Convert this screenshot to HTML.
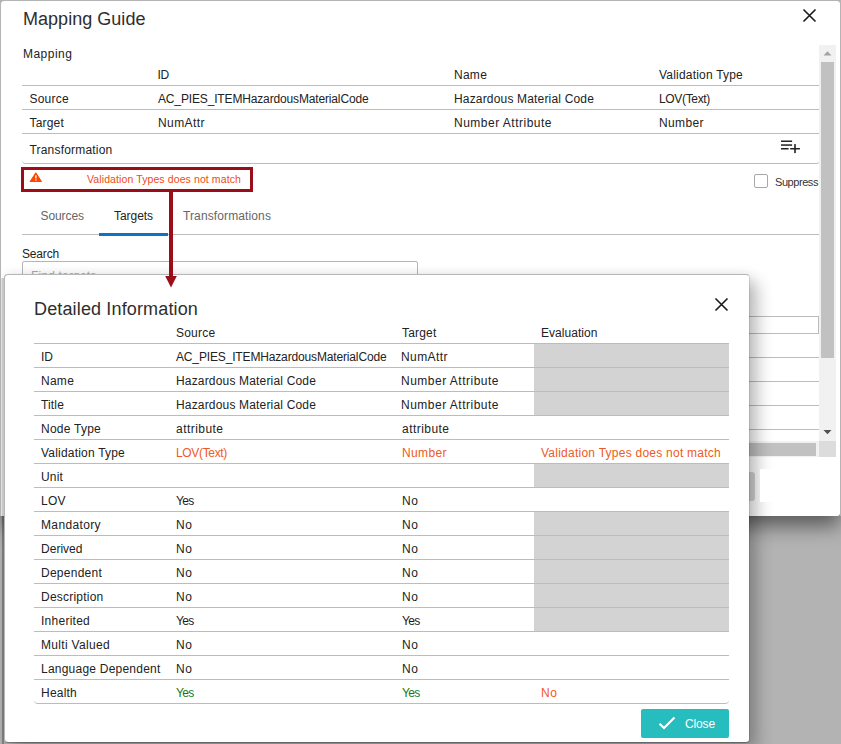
<!DOCTYPE html>
<html><head><meta charset="utf-8"><title>Mapping Guide</title>
<style>
html,body{margin:0;padding:0}
body{width:841px;height:744px;overflow:hidden;background:#b3b3b3;font-family:"Liberation Sans",sans-serif;font-size:12px;color:#222;position:relative}
.abs,.t,.ln,.g{position:absolute}
.t{white-space:nowrap;line-height:20px;display:block}
.ln{height:1px;background:#bcbcbc}
#outer{position:absolute;left:1px;top:1px;width:839px;height:515px;background:#fff;border-radius:3px;box-shadow:0 10px 20px rgba(0,0,0,.5)}
#oc{position:absolute;left:-1px;top:-1px;width:841px;height:517px;overflow:hidden}
#detail{position:absolute;left:4px;top:274px;width:744px;height:467px;background:#fff;background-clip:padding-box;border:1px solid;border-color:#b6b6b6 rgba(0,0,0,.1) rgba(0,0,0,.25) #b6b6b6;border-radius:4px;box-shadow:8px 8px 16px rgba(0,0,0,.24),0 0 12px rgba(0,0,0,.08)}
.g{background:#d3d3d3}
</style></head><body>
<div id="outer"><div id="oc">
<!-- table lines -->
<div class="ln" style="left:22px;top:85px;width:797px"></div>
<div class="ln" style="left:22px;top:109px;width:797px"></div>
<div class="ln" style="left:22px;top:133px;width:797px"></div>
<div class="abs" style="left:22px;top:150px;width:798px;height:13px;border-bottom:1px solid #bcbcbc;border-radius:0 0 4px 4px"></div>
<!-- playlist add icon -->
<svg class="abs" style="left:774px;top:134px" width="32" height="26" viewBox="0 0 32 26"><g fill="#222"><rect x="7" y="6.5" width="11.1" height="1.5"/><rect x="7" y="10.3" width="11.1" height="1.5"/><rect x="7" y="14" width="7.6" height="1.5"/><rect x="16.2" y="14" width="9.7" height="1.5"/><rect x="20.2" y="10.1" width="1.6" height="9"/></g></svg>
<!-- warning box -->
<div class="abs" style="left:21px;top:167px;width:226px;height:19px;border:3px solid #9c0d1a"></div>
<svg class="abs" style="left:29px;top:171px" width="14" height="12" viewBox="0 0 14 12"><path d="M6.8 1.8 L12.5 10.5 H1.1 Z" fill="#ff4500" stroke="#ff4500" stroke-width="1" stroke-linejoin="round"/><rect x="6.2" y="4.3" width="1.3" height="3.2" fill="#fff"/><rect x="6.2" y="8.4" width="1.3" height="1.3" fill="#fff"/></svg>
<!-- suppress checkbox -->
<div class="abs" style="left:754px;top:174px;width:12px;height:12px;border:1px solid #a8a8a8;border-radius:2px;background:#fff"></div>
<!-- tabs -->
<div class="ln" style="left:22px;top:234px;width:797px"></div>
<div class="abs" style="left:99px;top:233px;width:69px;height:3px;background:#1272c0"></div>
<!-- search input -->
<div class="abs" style="left:22px;top:261px;width:394px;height:28px;border:1px solid #b6b6b6;border-radius:2px"></div>
<!-- right side rows behind -->
<div class="abs" style="left:700px;top:316px;width:118px;height:16px;border:1px solid #bcbcbc;border-left:0"></div>
<div class="ln" style="left:700px;top:357px;width:119px"></div>
<div class="ln" style="left:700px;top:381px;width:119px"></div>
<div class="ln" style="left:700px;top:405px;width:119px"></div>
<div class="ln" style="left:700px;top:429px;width:119px"></div>
<!-- v scrollbar -->
<div class="abs" style="left:819px;top:45px;width:17px;height:396px;background:#f1f1f1"></div>
<div class="abs" style="left:821px;top:62px;width:13px;height:296px;background:#c1c1c1"></div>
<svg class="abs" style="left:819px;top:45px" width="17" height="17" viewBox="0 0 17 17"><path d="M4.5 10.5 L8.5 6.2 L12.5 10.5 Z" fill="#a3a3a3"/></svg>
<svg class="abs" style="left:819px;top:424px" width="17" height="17" viewBox="0 0 17 17"><path d="M4.5 6 L8.5 10.3 L12.5 6 Z" fill="#505050"/></svg>
<!-- h scrollbar -->
<div class="abs" style="left:22px;top:441px;width:797px;height:16px;background:#f1f1f1"></div>
<div class="abs" style="left:700px;top:443px;width:116px;height:13px;background:#c1c1c1"></div>
<div class="abs" style="left:819px;top:441px;width:17px;height:16px;background:#dcdcdc"></div>
<!-- footer -->
<div class="abs" style="left:660px;top:472px;width:95px;height:29px;background:#d6d6d6;border-radius:3px"></div>
<!-- close X -->
<svg class="abs" style="left:802px;top:8px" width="15" height="15" viewBox="0 0 15 15"><path d="M1.5 1.5 L13.5 13.5 M13.5 1.5 L1.5 13.5" stroke="#1a1a1a" stroke-width="1.6" fill="none"/></svg>
<!-- arrow -->
<div class="abs" style="left:169px;top:192px;width:4px;height:86px;background:#9c0d1a"></div>
<span class="t" style="left:23.0px;top:9.0px;font-size:18px;color:#2e2e2e;letter-spacing:0.031px;">Mapping Guide</span>
<span class="t" style="left:23.0px;top:44.0px;letter-spacing:0.467px;">Mapping</span>
<span class="t" style="left:157.5px;top:65.0px;letter-spacing:-0.250px;">ID</span>
<span class="t" style="left:454.0px;top:65.0px;letter-spacing:0.264px;">Name</span>
<span class="t" style="left:659.0px;top:65.0px;letter-spacing:0.203px;">Validation Type</span>
<span class="t" style="left:29.5px;top:89.0px;letter-spacing:0.209px;">Source</span>
<span class="t" style="left:158.0px;top:89.0px;letter-spacing:-0.150px;">AC_PIES_ITEMHazardousMaterialCode</span>
<span class="t" style="left:454.0px;top:89.0px;letter-spacing:0.171px;">Hazardous Material Code</span>
<span class="t" style="left:659.0px;top:89.0px;letter-spacing:-0.335px;">LOV(Text)</span>
<span class="t" style="left:29.5px;top:113.0px;letter-spacing:0.183px;">Target</span>
<span class="t" style="left:158.0px;top:113.0px;letter-spacing:0.426px;">NumAttr</span>
<span class="t" style="left:454.0px;top:113.0px;letter-spacing:0.497px;">Number Attribute</span>
<span class="t" style="left:659.0px;top:113.0px;letter-spacing:0.385px;">Number</span>
<span class="t" style="left:29.5px;top:140.0px;letter-spacing:0.189px;">Transformation</span>
<span class="t" style="left:87.0px;top:169.0px;font-size:10.5px;color:#f24a14;letter-spacing:0.103px;">Validation Types does not match</span>
<span class="t" style="left:775.0px;top:172.0px;font-size:11px;color:#333;letter-spacing:-0.436px;">Suppress</span>
<span class="t" style="left:40.5px;top:206.0px;color:#666;letter-spacing:-0.076px;">Sources</span>
<span class="t" style="left:114.0px;top:206.0px;letter-spacing:-0.051px;">Targets</span>
<span class="t" style="left:183.0px;top:206.0px;color:#666;letter-spacing:0.117px;">Transformations</span>
<span class="t" style="left:22.0px;top:244.0px;letter-spacing:-0.172px;">Search</span>
<span class="t" style="left:31.0px;top:266.0px;color:#aaa;letter-spacing:0.174px;">Find targets</span>
</div></div>

<div id="detail"><div class="abs" style="left:-5px;top:-275px;width:0;height:0">
<!-- grey cells -->
<div class="g" style="left:534px;top:344px;width:195px;height:72px"></div>
<div class="g" style="left:534px;top:464px;width:195px;height:24px"></div>
<div class="g" style="left:534px;top:512px;width:195px;height:120px"></div>
<div class="ln" style="left:34px;top:343px;width:695px"></div>
<div class="ln" style="left:34px;top:367px;width:695px"></div>
<div class="ln" style="left:34px;top:391px;width:695px"></div>
<div class="ln" style="left:34px;top:415px;width:695px"></div>
<div class="ln" style="left:34px;top:439px;width:695px"></div>
<div class="ln" style="left:34px;top:463px;width:695px"></div>
<div class="ln" style="left:34px;top:487px;width:695px"></div>
<div class="ln" style="left:34px;top:511px;width:695px"></div>
<div class="ln" style="left:34px;top:535px;width:695px"></div>
<div class="ln" style="left:34px;top:559px;width:695px"></div>
<div class="ln" style="left:34px;top:583px;width:695px"></div>
<div class="ln" style="left:34px;top:607px;width:695px"></div>
<div class="ln" style="left:34px;top:631px;width:695px"></div>
<div class="ln" style="left:34px;top:655px;width:695px"></div>
<div class="ln" style="left:34px;top:679px;width:695px"></div>
<div class="abs" style="left:34px;top:698px;width:695px;height:5px;border-bottom:1px solid #bcbcbc;border-radius:0 0 4px 4px"></div>
<!-- close X -->
<svg class="abs" style="left:714px;top:297px" width="15" height="15" viewBox="0 0 15 15"><path d="M1.5 1.5 L13.5 13.5 M13.5 1.5 L1.5 13.5" stroke="#1a1a1a" stroke-width="1.6" fill="none"/></svg>
<!-- close button -->
<div class="abs" style="left:641px;top:709px;width:88px;height:29px;background:#27bcbd;border-radius:2px"></div>
<svg class="abs" style="left:657px;top:715px" width="20" height="16" viewBox="0 0 20 16"><path d="M2.5 8.8 L7 13 L17.5 2.5" stroke="#fff" stroke-width="2.2" fill="none"/></svg>
<span class="t" style="left:34.0px;top:299.0px;font-size:18px;color:#2e2e2e;letter-spacing:0.145px;">Detailed Information</span>
<span class="t" style="left:176.0px;top:323.0px;letter-spacing:0.209px;">Source</span>
<span class="t" style="left:402.0px;top:323.0px;letter-spacing:0.183px;">Target</span>
<span class="t" style="left:541.0px;top:323.0px;letter-spacing:0.045px;">Evaluation</span>
<span class="t" style="left:41.0px;top:347.0px;">ID</span>
<span class="t" style="left:176.0px;top:347.0px;letter-spacing:-0.150px;">AC_PIES_ITEMHazardousMaterialCode</span>
<span class="t" style="left:401.0px;top:347.0px;letter-spacing:0.426px;">NumAttr</span>
<span class="t" style="left:41.0px;top:371.0px;letter-spacing:0.264px;">Name</span>
<span class="t" style="left:176.0px;top:371.0px;letter-spacing:0.171px;">Hazardous Material Code</span>
<span class="t" style="left:401.0px;top:371.0px;letter-spacing:0.497px;">Number Attribute</span>
<span class="t" style="left:41.0px;top:395.0px;letter-spacing:0.147px;">Title</span>
<span class="t" style="left:176.0px;top:395.0px;letter-spacing:0.171px;">Hazardous Material Code</span>
<span class="t" style="left:401.0px;top:395.0px;letter-spacing:0.497px;">Number Attribute</span>
<span class="t" style="left:41.0px;top:419.0px;letter-spacing:0.241px;">Node Type</span>
<span class="t" style="left:176.0px;top:419.0px;letter-spacing:0.460px;">attribute</span>
<span class="t" style="left:402.0px;top:419.0px;letter-spacing:0.460px;">attribute</span>
<span class="t" style="left:41.0px;top:443.0px;letter-spacing:0.203px;">Validation Type</span>
<span class="t" style="left:176.0px;top:443.0px;color:#ee5a24;letter-spacing:-0.335px;">LOV(Text)</span>
<span class="t" style="left:402.0px;top:443.0px;color:#ee5a24;letter-spacing:0.385px;">Number</span>
<span class="t" style="left:541.0px;top:443.0px;color:#ee5a24;letter-spacing:0.247px;">Validation Types does not match</span>
<span class="t" style="left:41.0px;top:467.0px;letter-spacing:0.176px;">Unit</span>
<span class="t" style="left:41.0px;top:491.0px;letter-spacing:0.264px;">LOV</span>
<span class="t" style="left:176.0px;top:491.0px;letter-spacing:-0.693px;">Yes</span>
<span class="t" style="left:402.0px;top:491.0px;letter-spacing:0.578px;">No</span>
<span class="t" style="left:41.0px;top:515.0px;letter-spacing:0.366px;">Mandatory</span>
<span class="t" style="left:176.0px;top:515.0px;letter-spacing:0.578px;">No</span>
<span class="t" style="left:402.0px;top:515.0px;letter-spacing:0.578px;">No</span>
<span class="t" style="left:41.0px;top:539.0px;letter-spacing:0.020px;">Derived</span>
<span class="t" style="left:176.0px;top:539.0px;letter-spacing:0.578px;">No</span>
<span class="t" style="left:402.0px;top:539.0px;letter-spacing:0.578px;">No</span>
<span class="t" style="left:41.0px;top:563.0px;letter-spacing:0.253px;">Dependent</span>
<span class="t" style="left:176.0px;top:563.0px;letter-spacing:0.578px;">No</span>
<span class="t" style="left:402.0px;top:563.0px;letter-spacing:0.578px;">No</span>
<span class="t" style="left:41.0px;top:587.0px;letter-spacing:0.224px;">Description</span>
<span class="t" style="left:176.0px;top:587.0px;letter-spacing:0.578px;">No</span>
<span class="t" style="left:402.0px;top:587.0px;letter-spacing:0.578px;">No</span>
<span class="t" style="left:41.0px;top:611.0px;letter-spacing:0.255px;">Inherited</span>
<span class="t" style="left:176.0px;top:611.0px;letter-spacing:-0.693px;">Yes</span>
<span class="t" style="left:402.0px;top:611.0px;letter-spacing:-0.693px;">Yes</span>
<span class="t" style="left:41.0px;top:635.0px;letter-spacing:0.320px;">Multi Valued</span>
<span class="t" style="left:176.0px;top:635.0px;letter-spacing:0.578px;">No</span>
<span class="t" style="left:402.0px;top:635.0px;letter-spacing:0.578px;">No</span>
<span class="t" style="left:41.0px;top:659.0px;letter-spacing:0.225px;">Language Dependent</span>
<span class="t" style="left:176.0px;top:659.0px;letter-spacing:0.578px;">No</span>
<span class="t" style="left:402.0px;top:659.0px;letter-spacing:0.578px;">No</span>
<span class="t" style="left:41.0px;top:683.0px;letter-spacing:0.219px;">Health</span>
<span class="t" style="left:176.0px;top:683.0px;color:#157a15;letter-spacing:-0.693px;">Yes</span>
<span class="t" style="left:402.0px;top:683.0px;color:#157a15;letter-spacing:-0.693px;">Yes</span>
<span class="t" style="left:541.0px;top:683.0px;color:#ee5a24;letter-spacing:0.578px;">No</span>
<span class="t" style="left:685.0px;top:714.0px;color:#fff;letter-spacing:-0.138px;">Close</span>
</div></div>
<div class="abs" style="left:760px;top:469px;width:79px;height:33px;background:#fff"></div>
<div class="abs" style="left:0;top:0;width:841px;height:1px;background:#b4b4b4"></div>
<div class="abs" style="left:0;top:0;width:1px;height:516px;background:#b4b4b4"></div>
<div class="abs" style="left:840px;top:0;width:1px;height:516px;background:#b4b4b4"></div>
<div class="abs" style="left:1px;top:278px;width:3px;height:238px;background:linear-gradient(90deg,#ececec,#c8c8c8 50%,#c8c8c8)"></div>
<div class="abs" style="left:2px;top:516px;width:2px;height:228px;background:rgba(0,0,0,.28)"></div>
<!-- arrow head (above detail dialog) -->
<svg class="abs" style="left:164px;top:275px" width="14" height="13" viewBox="0 0 14 13"><path d="M1.2 1 H12.8 L7 12.5 Z" fill="#9c0d1a"/></svg>
<div class="abs" style="left:169px;top:270px;width:4px;height:8px;background:#9c0d1a"></div>
</body></html>
